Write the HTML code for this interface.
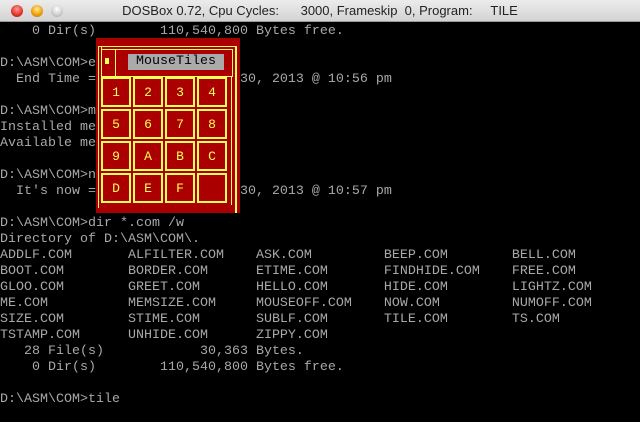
<!DOCTYPE html>
<html><head><style>
body{margin:0;width:640px;height:422px;background:#000;overflow:hidden;position:relative;font-family:"Liberation Sans",sans-serif}
#tb{position:absolute;left:0;top:0;width:640px;height:22px;background:linear-gradient(#ececec,#d3d3d3);border-bottom:1px solid #999;box-sizing:border-box}
#tb .t{position:absolute;left:0;width:640px;top:3px;text-align:center;font-size:13px;color:#222;white-space:pre}
.l{position:absolute;top:5px;width:12px;height:12px;border-radius:50%}
pre{position:absolute;left:0;top:24px;margin:0;font-family:"Liberation Mono",monospace;font-size:13.33px;line-height:16px;color:#a8a8a8}
.a{position:absolute;box-sizing:border-box}
.y{background:#ffff55}
.tile{position:absolute;width:30px;height:30px;border:2px solid #ffff55;box-sizing:border-box;color:#ffff55;font-family:"Liberation Mono",monospace;font-size:13px;text-align:center;line-height:28px}
</style></head><body>
<div id="tb"><div class="t">DOSBox 0.72, Cpu Cycles:      3000, Frameskip  0, Program:     TILE</div>
<div class="l" style="left:11px;background:radial-gradient(circle at 50% 35%,#f99,#d32 60%,#a11)"></div>
<div class="l" style="left:31px;background:radial-gradient(circle at 50% 35%,#fe9,#e90 60%,#b60)"></div>
<div class="l" style="left:51px;background:radial-gradient(circle at 50% 35%,#fff,#ccc 60%,#999)"></div>
</div>
<pre>    0 Dir(s)        110,540,800 Bytes free.

D:\ASM\COM>etime
  End Time = Sunday,     June 30, 2013 @ 10:56 pm

D:\ASM\COM>mem
Installed memory: 640K
Available memory: 600K

D:\ASM\COM>now
  It's now = Sunday,     June 30, 2013 @ 10:57 pm

D:\ASM\COM>dir *.com /w
Directory of D:\ASM\COM\.
ADDLF.COM       ALFILTER.COM    ASK.COM         BEEP.COM        BELL.COM
BOOT.COM        BORDER.COM      ETIME.COM       FINDHIDE.COM    FREE.COM
GLOO.COM        GREET.COM       HELLO.COM       HIDE.COM        LIGHTZ.COM
ME.COM          MEMSIZE.COM     MOUSEOFF.COM    NOW.COM         NUMOFF.COM
SIZE.COM        STIME.COM       SUBLF.COM       TILE.COM        TS.COM
TSTAMP.COM      UNHIDE.COM      ZIPPY.COM
   28 File(s)            30,363 Bytes.
    0 Dir(s)        110,540,800 Bytes free.

D:\ASM\COM>tile</pre>
<div class="a" style="left:96px;top:38px;width:144px;height:175px;background:#aa0000"></div>
<div class="a y" style="left:98px;top:46px;width:1px;height:162px"></div>
<div class="a y" style="left:101px;top:46px;width:1px;height:31px"></div>
<div class="a y" style="left:98px;top:46px;width:139px;height:1px"></div>
<div class="a y" style="left:101px;top:49px;width:132px;height:1px"></div>
<div class="a y" style="left:232px;top:49px;width:1px;height:28px"></div>
<div class="a y" style="left:115px;top:49px;width:1px;height:28px"></div>
<div class="a y" style="left:101px;top:76px;width:131px;height:1px"></div>
<div class="a y" style="left:231px;top:77px;width:1px;height:128px"></div>
<div class="a y" style="left:235px;top:46px;width:2px;height:167px"></div>
<div class="a y" style="left:105px;top:58px;width:4px;height:6px"></div>
<div class="a" style="left:128px;top:54px;width:96px;height:16px;background:#aaa;color:#000;font-family:'Liberation Mono',monospace;font-size:13.33px;line-height:16px;text-align:center">MouseTiles</div>
<div class="tile" style="left:101px;top:77px">1</div><div class="tile" style="left:133px;top:77px">2</div><div class="tile" style="left:165px;top:77px">3</div><div class="tile" style="left:197px;top:77px">4</div>
<div class="tile" style="left:101px;top:109px">5</div><div class="tile" style="left:133px;top:109px">6</div><div class="tile" style="left:165px;top:109px">7</div><div class="tile" style="left:197px;top:109px">8</div>
<div class="tile" style="left:101px;top:141px">9</div><div class="tile" style="left:133px;top:141px">A</div><div class="tile" style="left:165px;top:141px">B</div><div class="tile" style="left:197px;top:141px">C</div>
<div class="tile" style="left:101px;top:173px">D</div><div class="tile" style="left:133px;top:173px">E</div><div class="tile" style="left:165px;top:173px">F</div><div class="tile" style="left:197px;top:173px"></div>
</body></html>
